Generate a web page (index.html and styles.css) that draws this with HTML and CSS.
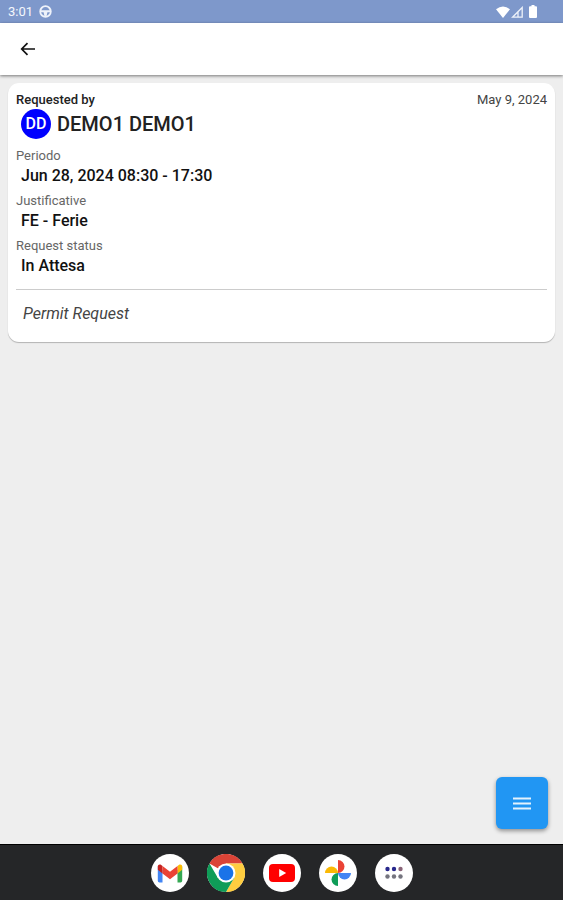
FILE: index.html
```html
<!doctype html>
<html lang="en">
<head>
  <meta charset="utf-8"/>
  <meta name="viewport" content="width=device-width, initial-scale=1"/>
  <title>Permit Request</title>
  <link rel="stylesheet" href="styles.css">
</head>
<body>

  <div class="status-bar">
    <span class="clock">3:01</span>
    <svg width="13" height="13" viewBox="0 0 13 13">
      <circle cx="6.5" cy="6.5" r="5.3" fill="none" stroke="#eef2fa" stroke-width="1.8"/>
      <path d="M2 5.2h9v2H8.4L7.6 11H5.4L4.6 7.200H2z" fill="#eef2fa"/>
    </svg>
    <div class="signals">
      <svg width="14" height="12" viewBox="0 0 14 12"><path d="M0 3.300Q7-2.300 14 3.300L7 12z" fill="#fff"/></svg>
      <svg width="12" height="12" viewBox="0 0 12 12"><path d="M1.500 11.200L11.200 1.500V11.200zM7 6v5" fill="none" stroke="#eef2fa" stroke-width="1.300"/></svg>
      <svg class="battery" width="8" height="13" viewBox="0 0 8 13"><path d="M2.500 0h3v1.300H7q1 0 1 1V12q0 1-1 1H1q-1 0-1-1V2.300q0-1 1-1h1.500z" fill="#fff"/></svg>
    </div>
  </div>

  <header class="app-bar">
    <button class="back" type="button" aria-label="Back">
      <svg width="16" height="14" viewBox="0 0 16 14"><path d="M15 7H2M7.500 1.200L1.700 7l5.800 5.800" fill="none" stroke="#111" stroke-width="1.700"/></svg>
    </button>
  </header>

  <main>
    <article class="card">
      <div class="card-top">
        <span class="requested">Requested by</span>
        <time datetime="2024-05-09">May 9, 2024</time>
      </div>
      <div class="person">
        <span class="avatar">DD</span>
        <h1>DEMO1 DEMO1</h1>
      </div>
      <dl>
        <dt>Periodo</dt>
        <dd>Jun 28, 2024 08:30 - 17:30</dd>
        <dt>Justificative</dt>
        <dd>FE - Ferie</dd>
        <dt>Request status</dt>
        <dd>In Attesa</dd>
      </dl>
      <hr>
      <p class="note">Permit Request</p>
    </article>

    <button class="fab" type="button" aria-label="Menu">
      <svg width="18" height="13" viewBox="0 0 18 13"><path d="M0 1.500h18M0 6.500h18M0 11.500h18" stroke="#e3f2fd" stroke-width="2"/></svg>
    </button>
  </main>

  <nav class="dock">
    <a href="#gmail" aria-label="Gmail">
      <svg width="38" height="38" viewBox="0 0 38 38">
        <path d="M6.800 12.500L11.500 16v12.500H8.500q-1.700 0-1.700-1.700z" fill="#4285f4"/>
        <path d="M31.200 12.500L26.500 16v12.500h3q1.700 0 1.700-1.700z" fill="#34a853"/>
        <path d="M26.500 12l1.300-1.100c1.500-1.100 3.400-.3 3.400 1.600v3.300l-4.700 3.700z" fill="#fbbc04"/>
        <path d="M11.500 12l-1.300-1.100c-1.500-1.100-3.400-.3-3.400 1.600v3.300l4.700 3.700z" fill="#c5221f"/>
        <path d="M11.500 12l7.500 5.700 7.500-5.700v7.500L19 25.200l-7.500-5.700z" fill="#ea4335"/>
      </svg>
    </a>
    <a href="#chrome" aria-label="Chrome">
      <svg width="38" height="38" viewBox="0 0 38 38">
        <path d="M19 19L2.500 9.500A19 19 0 0 1 35.500 9.500H19z" fill="#db4437"/>
        <path d="M35.500 9.500A19 19 0 0 1 19 38L27.200 23.700 19 9.500z" fill="#ffcd40"/>
        <path d="M2.500 9.500A19 19 0 0 0 19 38L27.200 23.700H10.800z" fill="#0f9d58"/>
        <circle cx="19" cy="19" r="9.500" fill="#fff"/>
        <circle cx="19" cy="19" r="7.400" fill="#1a73e8"/>
      </svg>
    </a>
    <a href="#youtube" aria-label="YouTube">
      <svg width="38" height="38" viewBox="0 0 38 38">
        <rect x="6" y="10" width="26" height="18" rx="4" fill="#f00"/>
        <path d="M16.200 15v8l7-4z" fill="#fff"/>
      </svg>
    </a>
    <a href="#photos" aria-label="Photos">
      <svg width="38" height="38" viewBox="0 0 38 38">
        <path d="M19 6a6.500 6.500 0 0 1 0 13z" fill="#ea4335"/>
        <path d="M32 19a6.500 6.500 0 0 1-13 0z" fill="#4285f4"/>
        <path d="M19 32a6.500 6.500 0 0 1 0-13z" fill="#0f9d58"/>
        <path d="M6 19a6.500 6.500 0 0 1 13 0z" fill="#fbb904"/>
      </svg>
    </a>
    <a href="#apps" aria-label="All apps">
      <svg width="38" height="38" viewBox="0 0 38 38">
        <g fill="#28288c"><circle cx="12.500" cy="15" r="2.200"/><circle cx="19" cy="15" r="2.200"/></g>
        <circle cx="25.500" cy="15" r="2.200" fill="#8a6478"/>
        <g fill="#74747e"><circle cx="12.500" cy="22.500" r="2.200"/><circle cx="19" cy="22.500" r="2.200"/><circle cx="25.500" cy="22.500" r="2.200"/></g>
      </svg>
    </a>
  </nav>

</body>
</html>
```
FILE: styles.css
```css
* { margin: 0; padding: 0; box-sizing: border-box; }
body {
  display: flex; flex-direction: column; min-height: 100vh;
  font-family: Roboto, "Liberation Sans", sans-serif; font-size: 13px; line-height: 18px;
  color: #222; background-color: #eee;
}
svg { display: block; }
button { border: none; cursor: pointer; }

.status-bar {
  display: flex; align-items: center; gap: 6px;
  height: 23px; padding: 0 26px 0 8px;
  color: #f4f7fc; background-color: #7e98cb;
}
.signals { display: flex; align-items: center; gap: 1px; margin-left: auto; }
.battery { margin-left: 5px; }

.app-bar {
  display: flex; align-items: center;
  height: 52px; padding: 0 12px;
  background-color: #fff; box-shadow: 0 1px 3px rgba(0, 0, 0, 0.5);
}
.back { padding: 8px; background: none; }

main { position: relative; flex: 1; padding: 8px; }
.card {
  padding: 8px 8px 16px;
  background-color: #fff; border-radius: 11px;
  box-shadow: 0 1px 1px rgba(0, 0, 0, 0.25);
}
.card-top { display: flex; justify-content: space-between; }
.requested { font-weight: 500; }
time { color: #444; }
.person { display: flex; align-items: center; gap: 6px; margin-bottom: 8px; padding-left: 5px; }
.avatar {
  display: flex; align-items: center; justify-content: center;
  width: 30px; height: 30px; border-radius: 50%;
  font-size: 16px; font-weight: 500; color: #fff; background-color: #00f;
}
h1 { font-size: 20px; font-weight: 500; line-height: 24px; }
dt { color: #666; }
dd { margin-bottom: 5px; padding-left: 5px; font-size: 16px; font-weight: 500; line-height: 22px; color: #111; }
dd:last-child { margin-bottom: 12px; }
hr { border: none; border-top: 1px solid #ccc; }
.note { margin-top: 12px; padding-left: 7px; font-size: 16px; font-style: italic; line-height: 24px; color: #444; }

.fab {
  position: absolute; right: 15px; bottom: 15px;
  display: flex; align-items: center; justify-content: center;
  width: 52px; height: 52px; border-radius: 6px;
  background-color: #2196f3; box-shadow: 0 2px 4px rgba(0, 0, 0, 0.4);
}

.dock {
  display: flex; align-items: center; justify-content: center; gap: 18px;
  height: 56px; background-color: #252628; border-top: 1px solid #000;
}
.dock a { border-radius: 50%; background-color: #fff; }
```
